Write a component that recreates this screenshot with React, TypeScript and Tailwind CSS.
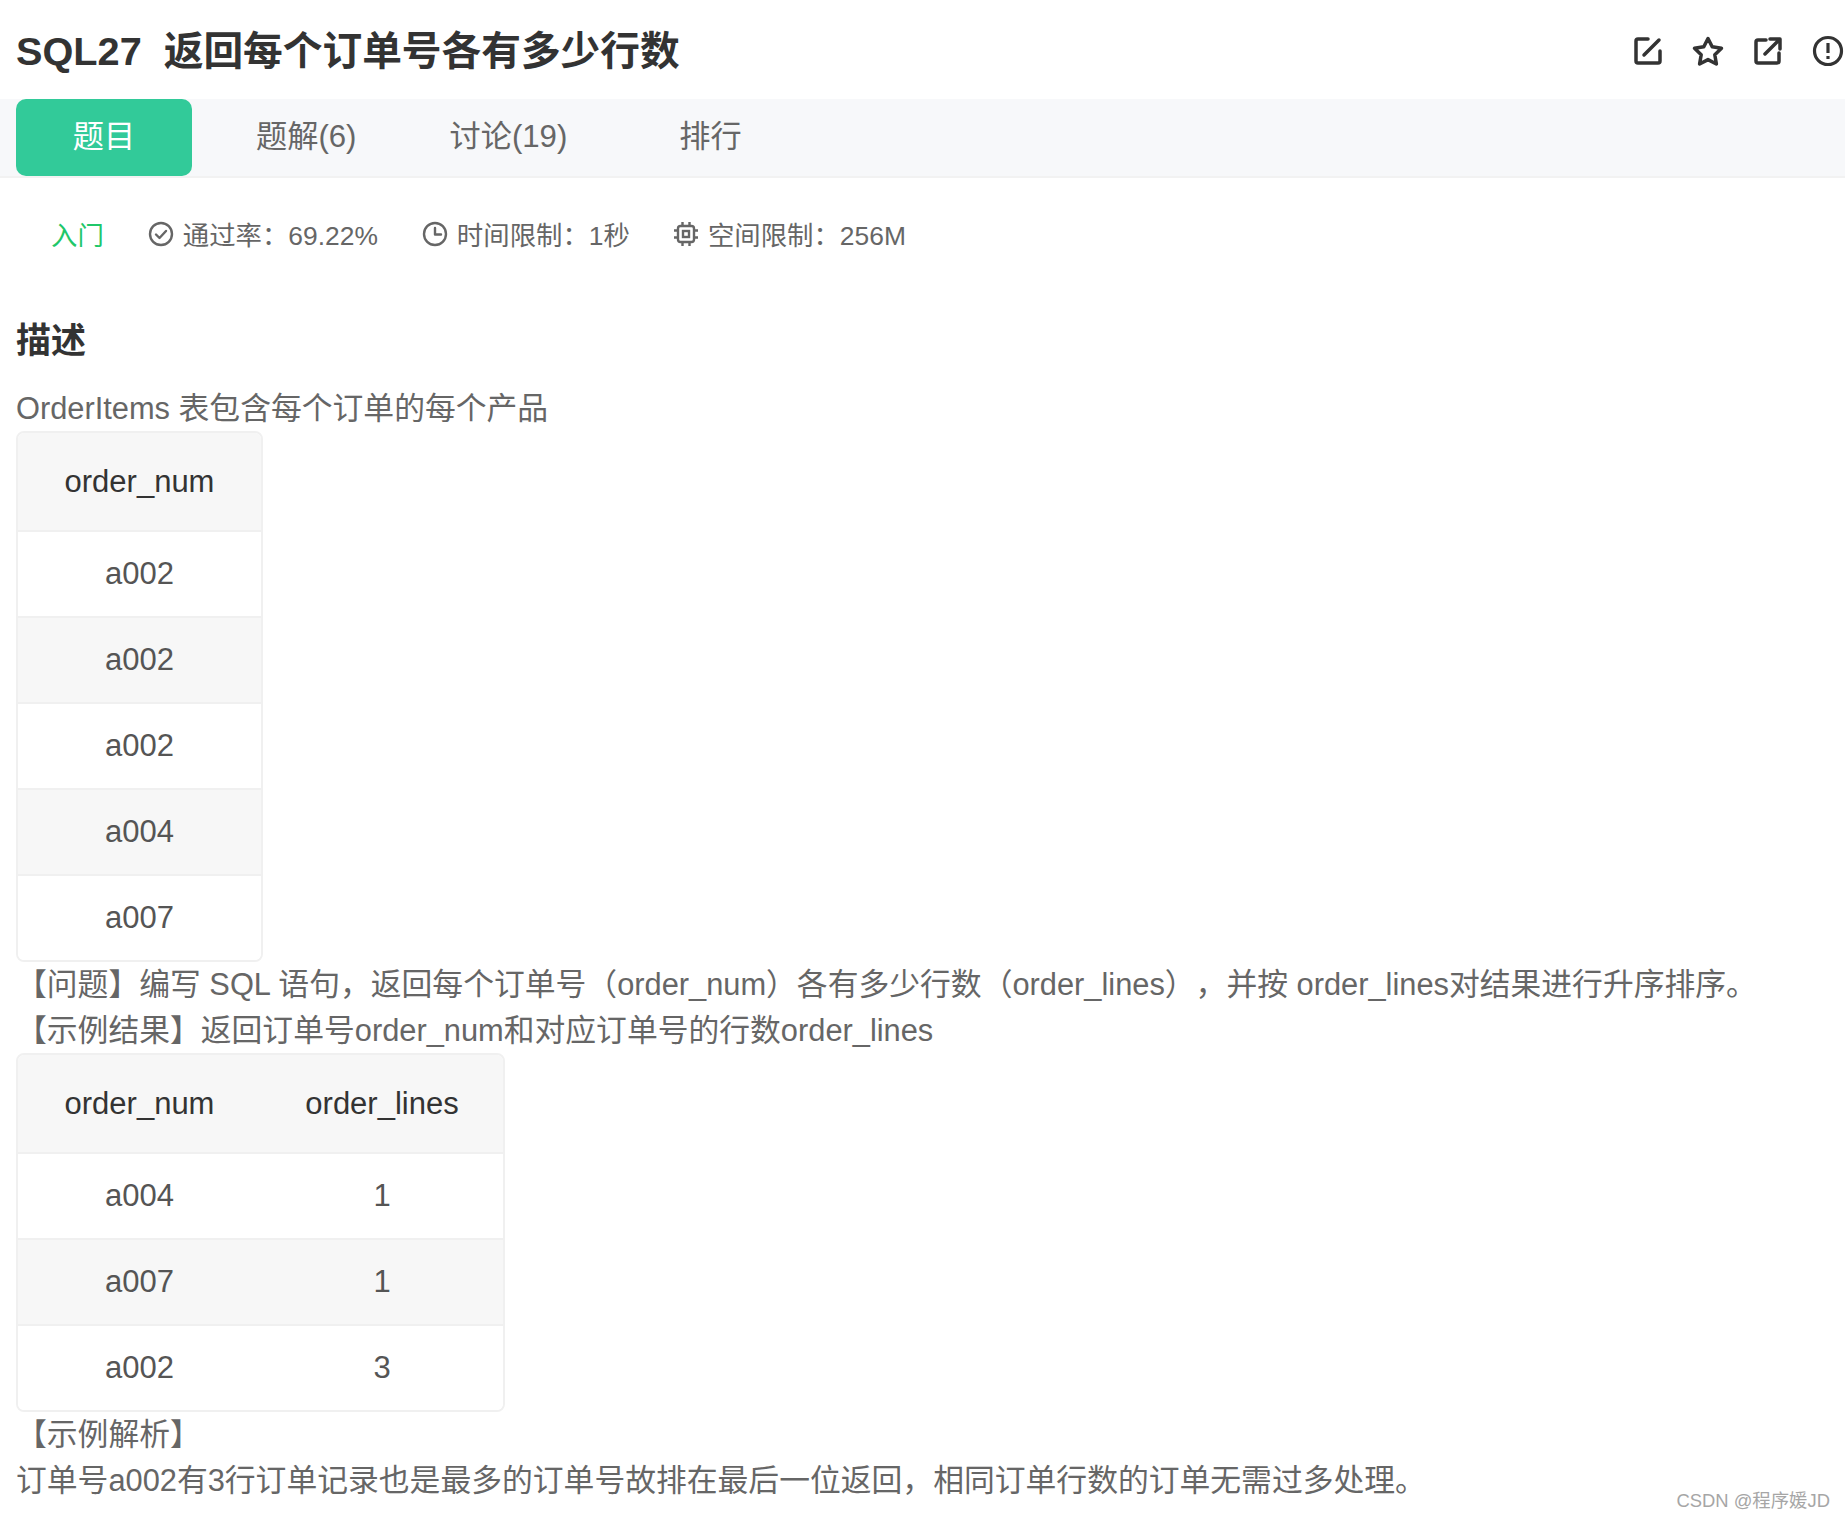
import React from 'react';

const FONT = "font-['Liberation_Sans','Noto_Sans_CJK_SC',sans-serif]";

const DataTable: React.FC<{ headers: string[]; rows: string[][] }> = ({ headers, rows }) => (
  <div className="mt-[-1px] w-fit overflow-hidden rounded-[8px] border-2 border-[#f0f0f0]">
    <table className="border-collapse text-center text-[31px]">
      <thead>
        <tr className="bg-[#f7f7f7]">
          {headers.map((h, j) => (
            <th
              key={h}
              className={`h-[98px] border-b-2 border-[#f0f0f0] font-normal text-[#333333] ${j === 0 ? 'w-[243px]' : 'w-[242px]'}`}
            >
              {h}
            </th>
          ))}
        </tr>
      </thead>
      <tbody>
        {rows.map((row, i) => (
          <tr key={i} className={i % 2 === 1 ? 'bg-[#f7f7f7]' : 'bg-white'}>
            {row.map((cell, j) => (
              <td
                key={j}
                className={`text-[#555555] ${i < rows.length - 1 ? 'h-[86px] border-b-2 border-[#f0f0f0]' : 'h-[85px]'}`}
              >
                {cell}
              </td>
            ))}
          </tr>
        ))}
      </tbody>
    </table>
  </div>
);

const IconEdit = () => (
  <svg width="30" height="30" viewBox="0 0 30 30" fill="none" stroke="#333333" strokeWidth="3.5" strokeLinecap="round" strokeLinejoin="round">
    <path d="M15 3H5a2 2 0 0 0-2 2v20a2 2 0 0 0 2 2h20a2 2 0 0 0 2-2V15" />
    <path d="M11 19 26 4" />
  </svg>
);

const IconStar = () => (
  <svg width="32" height="32" viewBox="0 0 32 32" fill="none" stroke="#333333" strokeWidth="3.5" strokeLinejoin="round">
    <path d="M16 3.5l4.2 8.300 9.300 1.400-6.700 6.500 1.600 9.300-8.400-4.400-8.400 4.400 1.600-9.300-6.700-6.500 9.300-1.400z" />
  </svg>
);

const IconShare = () => (
  <svg width="30" height="30" viewBox="0 0 30 30" fill="none" stroke="#333333" strokeWidth="3.5" strokeLinecap="round" strokeLinejoin="round">
    <path d="M13 4H5a2 2 0 0 0-2 2v19a2 2 0 0 0 2 2h19a2 2 0 0 0 2-2v-8" />
    <path d="M12 18 26 4M17 3h10v10" />
  </svg>
);

const IconAlert = () => (
  <svg width="32" height="32" viewBox="0 0 32 32" fill="none" stroke="#333333" strokeWidth="3.2">
    <circle cx="16" cy="16" r="13.5" />
    <path d="M16 8v10" />
    <path d="M16 21v3" />
  </svg>
);

const IconCheck = () => (
  <svg width="26" height="26" viewBox="0 0 26 26" fill="none" stroke="#666666" strokeWidth="2.4" strokeLinecap="round" strokeLinejoin="round">
    <circle cx="13" cy="13" r="11" />
    <path d="M8 13.5l3.500 3.500L18 10" />
  </svg>
);

const IconClock = () => (
  <svg width="26" height="26" viewBox="0 0 26 26" fill="none" stroke="#666666" strokeWidth="2.4" strokeLinecap="round" strokeLinejoin="round">
    <circle cx="13" cy="13" r="11" />
    <path d="M13 7v6.500h6" />
  </svg>
);

const IconChip = () => (
  <svg width="26" height="26" viewBox="0 0 26 26" fill="none" stroke="#666666" strokeWidth="2.4">
    <rect x="5" y="5" width="16" height="16" rx="2.5" />
    <rect x="10" y="10" width="6" height="6" />
    <path d="M9.500 1v4M16.500 1v4M9.500 21v4M16.500 21v4M1 9.500h4M1 16.500h4M21 9.500h4M21 16.500h4" />
  </svg>
);

export default function App() {
  return (
    <div className={`relative h-[1519px] w-[1845px] overflow-hidden bg-white ${FONT}`}>
      <header className="flex h-[99px] items-center justify-between pl-[16px]">
        <h1 className="mt-[4px] text-[39.7px] font-bold leading-none text-[#333333]">
          SQL27<span className="ml-[22px]">返回每个订单号各有多少行数</span>
        </h1>
        <div className="mr-[1px] mt-[2px] flex items-center gap-[29px]">
          <IconEdit />
          <IconStar />
          <IconShare />
          <IconAlert />
        </div>
      </header>

      <nav className="flex h-[79px] items-start border-b-2 border-[#f2f2f2] bg-[#f7f8fa] pl-[16px] text-[31.2px] text-[#666666]">
        <div className="flex h-[77px] w-[176px] items-center justify-center rounded-[10px] bg-[#32ca99] text-white">题目</div>
        <div className="flex h-[77px] items-center pl-[64px]">题解(6)</div>
        <div className="flex h-[77px] items-center pl-[93px]">讨论(19)</div>
        <div className="flex h-[77px] items-center pl-[112px]">排行</div>
      </nav>

      <div className="mt-[30px] flex h-[58px] items-center pl-[51px] text-[26.4px] text-[#666666]">
        <span className="text-[#1fc76a]">入门</span>
        <span className="ml-[44px] flex items-center gap-[9px]">
          <span className="mt-[-5px]"><IconCheck /></span>
          通过率：69.22%
        </span>
        <span className="ml-[44px] flex items-center gap-[9px]">
          <span className="mt-[-5px]"><IconClock /></span>
          时间限制：1秒
        </span>
        <span className="ml-[43px] flex items-center gap-[9px]">
          <span className="mt-[-5px]"><IconChip /></span>
          空间限制：256M
        </span>
      </div>

      <main className="px-[16px] pt-[52px] text-[30.8px] leading-[46px] text-[#666666] [text-spacing-trim:space-all]">
        <h2 className="mb-[22px] text-[35px] font-bold leading-[46px] text-[#333333]">描述</h2>
        <p>OrderItems 表包含每个订单的每个产品</p>
        <DataTable headers={['order_num']} rows={[['a002'], ['a002'], ['a002'], ['a004'], ['a007']]} />
        <p>【问题】编写 SQL 语句，返回每个订单号（order_num）各有多少行数（order_lines），并按 order_lines对结果进行升序排序。</p>
        <p>【示例结果】返回订单号order_num和对应订单号的行数order_lines</p>
        <DataTable
          headers={['order_num', 'order_lines']}
          rows={[
            ['a004', '1'],
            ['a007', '1'],
            ['a002', '3'],
          ]}
        />
        <p>【示例解析】</p>
        <p>订单号a002有3行订单记录也是最多的订单号故排在最后一位返回，相同订单行数的订单无需过多处理。</p>
      </main>

      <div className="absolute bottom-[4px] right-[15px] text-[18.4px] text-[#a6a6a6]">CSDN @程序媛JD</div>
    </div>
  );
}
